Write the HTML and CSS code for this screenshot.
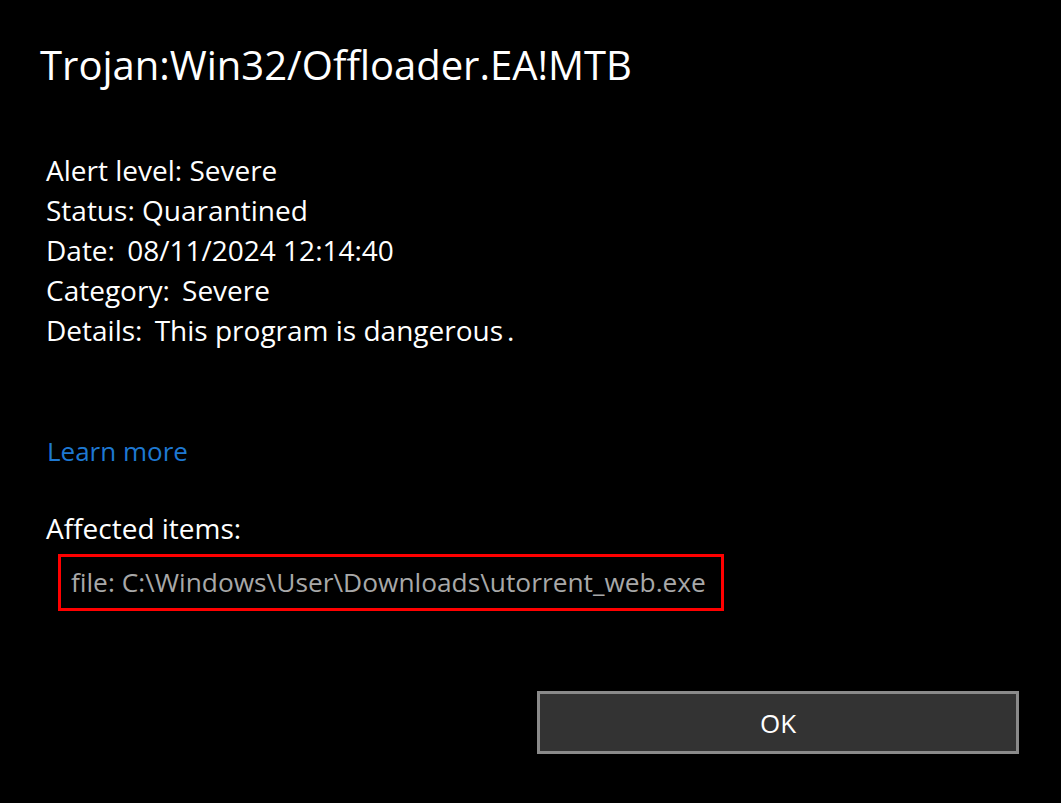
FILE: index.html
```html
<!DOCTYPE html>
<html>
<head>
<meta charset="utf-8">
<link rel="stylesheet" href="styles.css">
</head>
<body>
<div class="dialog">
  <h1 class="title">Trojan:Win32/Offloader.EA!MTB</h1>
  <div class="details">
    <div class="row">Alert level: Severe</div>
    <div class="row">Status: Quarantined</div>
    <div class="row">Date: <span class="val">08/11/2024 12:14:40</span></div>
    <div class="row">Category: <span class="val">Severe</span></div>
    <div class="row">Details: <span class="val">This program is dangerous<span class="dot">.</span></span></div>
  </div>
  <a class="learn" href="#">Learn more</a>
  <div class="affected">Affected items:</div>
  <div class="item">file: C:\Windows\User\Downloads\utorrent_web.exe</div>
  <div class="actions">
    <button class="ok">OK</button>
  </div>
</div>
</body>
</html>
```
FILE: styles.css
```css
html, body {
  margin: 0;
  padding: 0;
  background: #000;
}
body {
  width: 1061px;
  height: 803px;
  overflow: hidden;
  font-family: "Open Sans", "Noto Sans", sans-serif;
  color: #fff;
}
.dialog {
  display: flex;
  flex-direction: column;
  padding: 34px 0 0 40px;
}
.title {
  margin: 0;
  font-weight: 400;
  font-size: 40px;
  line-height: 62px;
}
.details {
  margin-top: 54px;
  padding-left: 6px;
  display: flex;
  flex-direction: column;
}
.row {
  font-size: 28px;
  line-height: 40px;
}
.val {
  margin-left: 5px;
}
.dot {
  margin-left: 4px;
}
.learn {
  margin-top: 81px;
  padding-left: 7px;
  color: #1e78d2;
  text-decoration: none;
  font-size: 26px;
  line-height: 40px;
  align-self: flex-start;
}
.affected {
  margin-top: 37px;
  padding-left: 6px;
  font-size: 28px;
  line-height: 40px;
}
.item {
  align-self: flex-start;
  margin-top: 6px;
  margin-left: 18px;
  border: 3px solid #ff0000;
  padding: 0 15px 0 10px;
  color: #a8a8a8;
  font-size: 26.3px;
  line-height: 51px;
}
.actions {
  display: flex;
  justify-content: flex-end;
  padding-right: 42px;
  margin-top: 80px;
}
.ok {
  width: 482px;
  height: 63px;
  background: #333;
  border: 3px solid #8a8a8a;
  color: #fff;
  font-family: inherit;
  font-size: 26px;
}
```
